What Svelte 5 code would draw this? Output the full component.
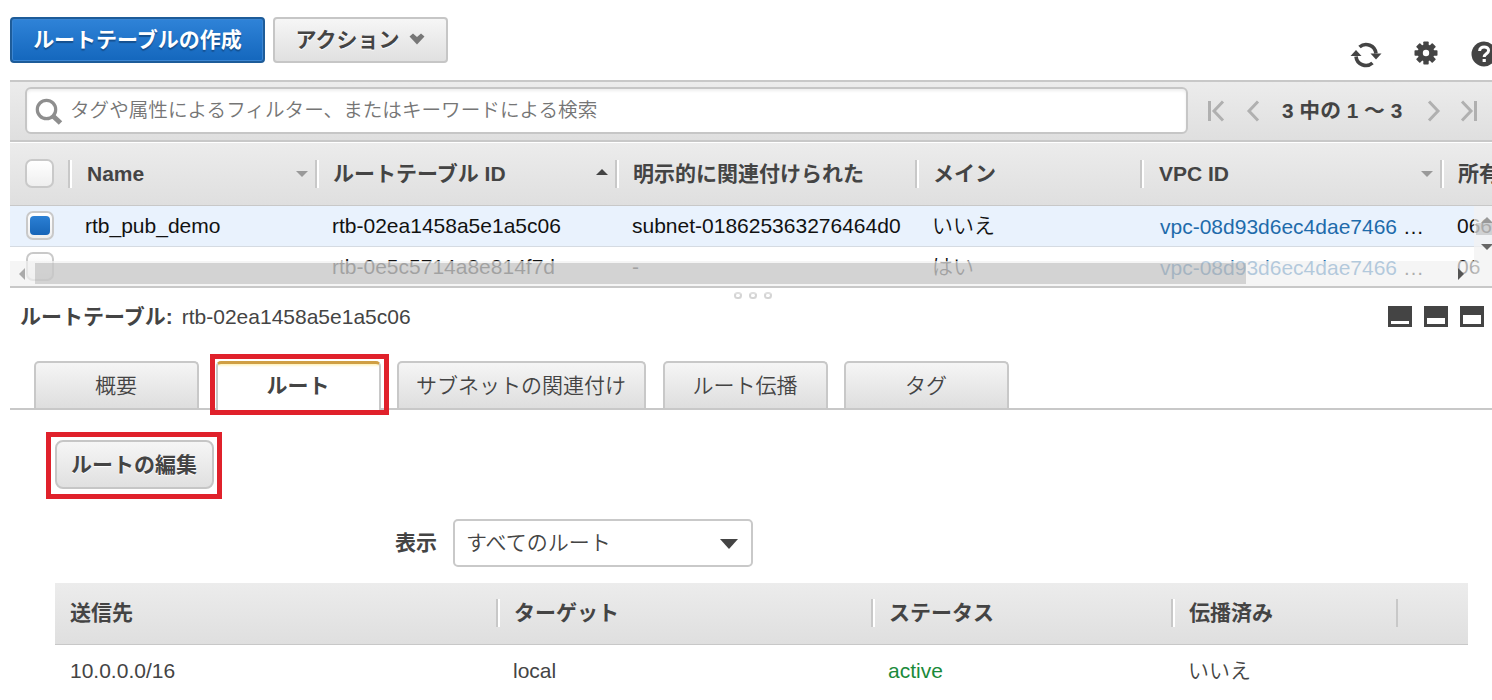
<script>
    const columns = ["Name", "ルートテーブル ID", "明示的に関連付けられた", "メイン", "VPC ID", "所有"];
    const sort = { 0: "down", 1: "up", 4: "down" };

    const rows = [
        {
            selected: true,
            name: "rtb_pub_demo",
            id: "rtb-02ea1458a5e1a5c06",
            subnet: "subnet-018625363276464d0",
            main: "いいえ",
            vpc: "vpc-08d93d6ec4dae7466",
            owner: "066",
        },
        {
            selected: false,
            name: "",
            id: "rtb-0e5c5714a8e814f7d",
            subnet: "-",
            main: "はい",
            vpc: "vpc-08d93d6ec4dae7466",
            owner: "06",
        },
    ];

    const tabs = ["概要", "ルート", "サブネットの関連付け", "ルート伝播", "タグ"];
    let activeTab = "ルート";

    const routeColumns = ["送信先", "ターゲット", "ステータス", "伝播済み", ""];
</script>

<main>
    <header class="toolbar">
        <button class="btn primary">ルートテーブルの作成</button>
        <button class="btn actions">
            アクション
            <svg width="16" height="12" viewBox="0 0 16 12">
                <path d="M0.5 3.5 L4 0.5 L8 4 L12 0.5 L15.5 3.5 L8 11.5 Z" fill="#777" />
            </svg>
        </button>
        <div class="tools">
            <svg width="32" height="26" viewBox="0 0 32 26">
                <g fill="none" stroke="#444" stroke-width="3.6">
                    <path d="M9.5 5 A10 10 0 0 1 26 11.5" />
                    <path d="M22.5 21 A10 10 0 0 1 6 14.5" />
                </g>
                <path d="M20.5 11.5 H31.5 L26 17.5 Z" fill="#444" />
                <path d="M0.5 14 H11.5 L6 8 Z" fill="#444" />
            </svg>
            <svg class="gear" width="24" height="24" viewBox="-12 -12 24 24">
                <g fill="#444">
                    {#each [0, 45, 90, 135] as angle}
                        <rect x="-2.7" y="-11.5" width="5.4" height="23" rx="0.8" transform="rotate({angle})" />
                    {/each}
                    <circle r="8.4" />
                </g>
                <circle r="3.2" fill="#fff" />
            </svg>
            <svg class="help" width="26" height="26" viewBox="0 0 26 26">
                <circle cx="13" cy="13" r="12.5" fill="#444" />
                <path
                    d="M8.6 10 C8.6 4.5 17.6 4.7 17.6 9.6 C17.6 12.8 13.2 12.8 13.2 16"
                    fill="none"
                    stroke="#fff"
                    stroke-width="3"
                />
                <rect x="11.6" y="18" width="3.2" height="3" fill="#fff" />
            </svg>
        </div>
    </header>

    <section class="filter">
        <div class="search">
            <svg width="28" height="28" viewBox="0 0 28 28" fill="none" stroke="#8e8e8e">
                <circle cx="11.5" cy="11.5" r="9.2" stroke-width="3.2" />
                <path d="M18 18 L25.5 25" stroke-width="5" />
            </svg>
            <span>タグや属性によるフィルター、またはキーワードによる検索</span>
        </div>
        <div class="pager">
            <svg width="18" height="22" viewBox="0 0 18 22">
                <path d="M2.5 1 V21 M16 1.5 L7 11 L16 20.5" />
            </svg>
            <svg class="prev" width="14" height="22" viewBox="0 0 14 22">
                <path d="M12 1.5 L3 11 L12 20.5" />
            </svg>
            <b>3 中の 1 ～ 3</b>
            <svg class="next" width="14" height="22" viewBox="0 0 14 22">
                <path d="M2 1.5 L11 11 L2 20.5" />
            </svg>
            <svg width="18" height="22" viewBox="0 0 18 22">
                <path d="M15.5 1 V21 M2 1.5 L11 11 L2 20.5" />
            </svg>
        </div>
    </section>

    <section class="list">
        <div class="grid head">
            <div class="pick"><span class="check"></span></div>
            {#each columns as column, i}
                <div class="th">
                    <span>{column}</span>
                    {#if sort[i]}
                        <i class="arrow {sort[i]}"></i>
                    {/if}
                </div>
            {/each}
        </div>
        {#each rows as row}
            <div class="grid row {row.selected ? 'selected' : ''}">
                <div class="pick"><span class="check {row.selected ? 'on' : ''}"></span></div>
                <div class="td name">{row.name}</div>
                <div class="td">{row.id}</div>
                <div class="td">{row.subnet}</div>
                <div class="td">{row.main}</div>
                <div class="td vpc"><a href="#vpc">{row.vpc}</a> …</div>
                <div class="td">{row.owner}</div>
            </div>
        {/each}
        <div class="hscroll">
            <i class="left"></i>
            <div class="hthumb"></div>
            <i class="right"></i>
        </div>
        <div class="vscroll">
            <i class="arrow up"></i>
            <div class="vthumb"></div>
            <i class="arrow down"></i>
        </div>
    </section>

    <div class="grip"><i></i><i></i><i></i></div>

    <section class="title">
        <b>ルートテーブル:</b>
        <span>rtb-02ea1458a5e1a5c06</span>
        <div class="panes">
            <i class="small"></i>
            <i class="medium"></i>
            <i class="large"></i>
        </div>
    </section>

    <nav class="tabs">
        {#each tabs as tab}
            <button class="tab {tab === activeTab ? 'active' : ''}" on:click={() => (activeTab = tab)}>
                {tab}
                {#if tab === "ルート"}
                    <span class="marker"></span>
                {/if}
            </button>
        {/each}
    </nav>

    <section class="detail">
        <div class="marked">
            <button class="btn edit">ルートの編集</button>
        </div>

        <div class="view">
            <b>表示</b>
            <div class="select">
                <span>すべてのルート</span>
                <i></i>
            </div>
        </div>

        <div class="routes">
            <div class="rgrid rhead">
                {#each routeColumns as column}
                    <div class="rth">{column}</div>
                {/each}
            </div>
            <div class="rgrid rrow">
                <div>10.0.0.0/16</div>
                <div>local</div>
                <div class="state">active</div>
                <div>いいえ</div>
            </div>
        </div>
    </section>
</main>

<style>
    :global(body) {
        background: #fff;
        overflow: hidden;
    }

    main {
        --line: #c8c8c8;
        width: 1492px;
        height: 700px;
        overflow: hidden;
        box-sizing: border-box;
        font: 350 21px/30px "Liberation Sans", "Noto Sans CJK JP", sans-serif;
        color: #444;
        white-space: nowrap;
    }

    main :global(*) {
        box-sizing: border-box;
    }

    b {
        font-weight: 700;
    }

    svg,
    i {
        display: block;
        flex: none;
    }

    .toolbar {
        display: flex;
        align-items: flex-start;
        gap: 8px;
        height: 80px;
        padding: 17px 0 0 10px;
    }

    .btn {
        display: flex;
        flex: none;
        align-items: center;
        justify-content: center;
        height: 46px;
        padding: 0;
        font: inherit;
        font-weight: 700;
        color: #444;
        border: 2px solid #c6c6c6;
        border-radius: 4px;
        background: linear-gradient(#f6f6f6, #e0e0e0);
        text-shadow: 0 1px 1px #fff;
    }

    .primary {
        width: 255px;
        color: #fff;
        border-color: #1e5c99;
        background: linear-gradient(#2f83d8, #1467bd);
        box-shadow: inset 0 0 0 1px #3c86d3;
        text-shadow: 0 2px 1px #15508f;
    }

    .actions {
        width: 175px;
        gap: 10px;
    }

    .actions svg {
        margin-top: -3px;
    }

    .tools {
        display: flex;
        flex: none;
        align-items: center;
        margin: 25px 0 0 894px;
    }

    .gear {
        margin: -4px 0 0 32px;
    }

    .help {
        margin: -2px 0 0 33px;
    }

    .filter {
        display: flex;
        align-items: center;
        height: 62px;
        margin-left: 10px;
        padding: 0 0 1px 15px;
        border-top: 2px solid var(--line);
        border-bottom: 2px solid var(--line);
        background: linear-gradient(#ececec, #dfdfdf);
    }

    .search {
        display: flex;
        align-items: center;
        gap: 7px;
        width: 1163px;
        height: 47px;
        padding: 0 8px;
        color: #757575;
        font-size: 19.6px;
        border: 2px solid #c6c6c6;
        border-radius: 6px;
        background: #fff;
        box-shadow: inset 0 2px 3px #eee;
    }

    .search span {
        margin-top: -2px;
    }

    .search svg {
        margin-top: 2px;
    }

    .pager {
        display: flex;
        align-items: center;
        margin-left: 19px;
    }

    .pager path {
        fill: none;
        stroke: #b0b0b0;
        stroke-width: 3;
    }

    .pager b {
        width: 123px;
        margin: 0 22px;
        font-size: 20.8px;
    }

    .prev {
        margin-left: 21px;
    }

    .next {
        margin-right: 19px;
    }

    .list {
        position: relative;
        height: 146px;
        margin-left: 10px;
        overflow: hidden;
        border-bottom: 2px solid var(--line);
    }

    .grid {
        display: grid;
        grid-template-columns: 59px 247px 300px 300px 225px 300px 51px;
        align-items: center;
    }

    .head {
        height: 64px;
        border-top: 1px solid #fff;
        border-bottom: 1px solid var(--line);
        background: linear-gradient(#ececec, #dfdfdf);
        font-weight: 700;
    }

    .th {
        position: relative;
        display: flex;
        align-items: center;
        justify-content: space-between;
        height: 28px;
        margin: -1px 0 0 -1px;
        padding: 0 8px 0 17px;
        border-left: 2px solid var(--line);
        box-shadow: inset 2px 0 #fff;
    }

    .th:nth-child(3),
    .th:nth-child(4),
    .th:nth-child(5),
    .th:nth-child(7) {
        padding-left: 16px;
    }

    .arrow {
        width: 0;
        height: 0;
        border: 6px solid transparent;
    }

    .arrow.down {
        border-top-color: #999;
        border-bottom: 0;
    }

    .arrow.up {
        border-bottom-color: #444;
        border-top: 0;
    }

    .th .up {
        margin-top: -3px;
    }

    .row {
        height: 41px;
        color: #111;
        border-bottom: 1px solid #d5dbe2;
    }

    .selected {
        background: #e9f2fd;
    }

    .pick {
        padding-left: 15px;
    }

    .check {
        display: block;
        width: 29px;
        height: 29px;
        margin-top: -1px;
        border: 2px solid #c9c9c9;
        border-radius: 7px;
        background: linear-gradient(#fff, #efefef);
    }

    .row .check {
        margin-left: 1px;
        width: 28px;
    }

    .check.on {
        padding: 3px 2px;
    }

    .check.on::after {
        content: "";
        display: block;
        width: 20px;
        height: 19px;
        border-radius: 4px;
        background: linear-gradient(#2b80d4, #1765b8);
    }

    .td {
        padding-left: 16px;
    }

    .td.vpc {
        padding: 2px 0 0 19px;
    }

    a {
        color: #1e6bab;
        text-decoration: none;
    }

    /* overlay scrollbars sit on top of the rows */
    .hscroll {
        position: absolute;
        left: 0;
        right: 18px;
        bottom: 0;
        display: flex;
        align-items: center;
        height: 25px;
        padding-left: 9px;
        background: rgba(241, 241, 241, 0.7);
    }

    .hthumb {
        width: 1211px;
        height: 21px;
        margin: 0 212px 0 10px;
        background: rgba(131, 131, 131, 0.3);
    }

    .left {
        border: 6px solid transparent;
        border-right-color: #aaa;
        border-left: 0;
    }

    .right {
        border: 6px solid transparent;
        border-left-color: #555;
        border-right: 0;
    }

    .vscroll {
        position: absolute;
        top: 64px;
        right: 0;
        bottom: 0;
        width: 18px;
        padding: 11px 0 0 7px;
        background: rgba(241, 241, 241, 0.75);
    }

    .vscroll .up {
        border-bottom-color: #999;
    }

    .vscroll .down {
        margin-top: 9px;
        border-top-color: #666;
    }

    .vthumb {
        width: 18px;
        height: 12px;
        margin-left: -5px;
        background: rgba(131, 131, 131, 0.3);
    }

    .grip {
        display: flex;
        justify-content: center;
        gap: 7px;
        height: 13px;
        padding: 4px 0 0 14px;
    }

    .grip i {
        width: 8px;
        height: 7px;
        border: 2px solid #d4d4d4;
        border-radius: 4px;
        border-top-color: #dedede;
    }

    .title {
        display: flex;
        align-items: center;
        gap: 9px;
        height: 30px;
        padding: 1px 8px 0 20px;
    }

    .panes {
        display: flex;
        gap: 12px;
        margin: -1px 0 0 auto;
    }

    .panes i {
        display: flex;
        align-items: flex-end;
        width: 24px;
        height: 21px;
        padding: 3px;
        background: #444;
    }

    .panes i::after {
        content: "";
        width: 18px;
        height: 3px;
        background: #fff;
    }

    .panes .medium::after {
        height: 6px;
    }

    .panes .large::after {
        height: 9px;
    }

    .tabs {
        display: flex;
        align-items: flex-end;
        height: 79px;
        margin-left: 10px;
        padding-left: 24px;
        border-bottom: 2px solid var(--line);
    }

    .tab {
        position: relative;
        width: 165px;
        height: 47px;
        margin-right: 16px;
        padding: 0 1px 0 0;
        font: inherit;
        color: #444;
        border: 2px solid var(--line);
        border-bottom: 0;
        border-radius: 5px 5px 0 0;
        background: linear-gradient(#f5f5f5, #dedede);
    }

    .tab:nth-child(3) {
        width: 249px;
        margin-right: 17px;
    }

    .tab.active {
        height: 49px;
        margin: 0 16px -2px 1px;
        padding-bottom: 2px;
        font-weight: 700;
        border-top: 3px solid #d09f43;
        background: linear-gradient(#fff1b8, #fff 3px);
    }

    /* red frame drawn round the tab */
    .marker {
        position: absolute;
        inset: -10px -10px -5px -8px;
        border: 5px solid #e0212b;
    }

    .detail {
        padding: 22px 24px 0 46px;
    }

    .marked {
        width: 176px;
        height: 67px;
        padding: 3px 4px;
        border: 5px solid #e0212b;
    }

    .edit {
        width: 159px;
        height: 49px;
        padding-right: 1px;
        border-radius: 8px;
    }

    .view {
        display: flex;
        align-items: center;
        gap: 16px;
        height: 48px;
        margin: 20px 0 16px 349px;
    }

    .select {
        display: flex;
        align-items: center;
        justify-content: space-between;
        width: 300px;
        height: 48px;
        padding: 0 13px 0 11px;
        border: 2px solid #c9c9c9;
        border-radius: 5px;
    }

    .select i {
        margin-top: 2px;
        border: 9px solid transparent;
        border-top: 10px solid #444;
        border-bottom: 0;
    }

    .routes {
        margin-left: 9px;
    }

    .rgrid {
        display: grid;
        grid-template-columns: 442px 375px 300px 225px 71px;
        align-items: center;
    }

    .rhead {
        height: 62px;
        font-weight: 700;
        border-bottom: 1px solid var(--line);
        background: linear-gradient(#ececec, #dfdfdf);
    }

    .rth {
        height: 28px;
        margin: -2px 0 0 -1px;
        padding-left: 16px;
        line-height: 27px;
        border-left: 2px solid var(--line);
        box-shadow: inset 2px 0 #fff;
    }

    .rth:first-child {
        margin-left: 0;
        padding-left: 13px;
        border-color: transparent;
        box-shadow: none;
    }

    .rth:last-child {
        box-shadow: none;
    }

    .rrow {
        height: 52px;
    }

    .rrow div {
        padding-left: 16px;
    }

    .rrow div:first-child {
        padding-left: 15px;
    }

    .rrow .state {
        color: #1a8a3a;
    }
</style>
